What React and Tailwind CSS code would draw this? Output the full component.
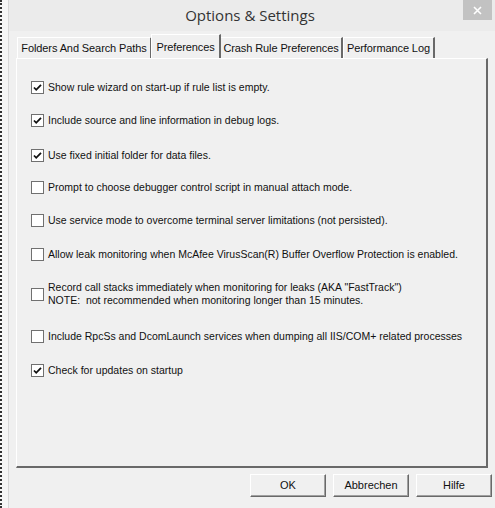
import React from "react";

const prefs = [
  { checked: true, lines: ["Show rule wizard on start-up if rule list is empty."], gap: "mb-[19px]" },
  { checked: true, lines: ["Include source and line information in debug logs."], gap: "mb-[21px]" },
  { checked: true, lines: ["Use fixed initial folder for data files."], gap: "mb-[18px]" },
  { checked: false, lines: ["Prompt to choose debugger control script in manual attach mode."], gap: "mb-[19px]" },
  { checked: false, lines: ["Use service mode to overcome terminal server limitations (not persisted)."], gap: "mb-[20px]" },
  { checked: false, lines: ["Allow leak monitoring when McAfee VirusScan(R) Buffer Overflow Protection is enabled."], gap: "mb-[19px]" },
  {
    checked: false,
    lines: [
      'Record call stacks immediately when monitoring for leaks (AKA "FastTrack")',
      "NOTE:  not recommended when monitoring longer than 15 minutes.",
    ],
    gap: "mb-[21px]",
  },
  { checked: false, lines: ["Include RpcSs and DcomLaunch services when dumping all IIS/COM+ related processes"], gap: "mb-[20px]" },
  { checked: true, lines: ["Check for updates on startup"], gap: "" },
];

const tabs = [
  { label: "Folders And Search Paths", w: "w-[135px]" },
  { label: "Preferences", w: "w-[70px]", active: true },
  { label: "Crash Rule Preferences", w: "w-[123px]" },
  { label: "Performance Log", w: "w-[92px]" },
];

function Checkbox({ checked }) {
  return (
    <div className="w-[13px] h-[13px] shrink-0 border border-[#707070] bg-white flex items-center justify-center">
      {checked && (
        <svg width="9" height="9" viewBox="0 0 9 9">
          <path d="M1 4.5 L3.2 6.8 L8 1.8" stroke="#111" strokeWidth="1.8" fill="none" />
        </svg>
      )}
    </div>
  );
}

function Button({ children }) {
  return (
    <button className="w-[76px] h-[23px] bg-[#f0f0f0] border border-t-white border-l-white border-r-[#696969] border-b-[#696969] shadow-[inset_-1px_-1px_0_#a0a0a0] text-[11px] text-[#111]">
      {children}
    </button>
  );
}

export default function App() {
  return (
    <div className="w-[495px] h-[508px] flex bg-[#f0f0f0] overflow-hidden font-['Liberation_Sans',sans-serif] text-[#111] relative">
      {/* window edge strip */}
      <div className="w-[8px] shrink-0 bg-[#f6f6f6] border-l-2 border-dotted border-[#333]" />

      <div className="flex-1 flex flex-col border-l border-[#d8d8d8]">
        {/* title bar */}
        <div className="h-[31px] shrink-0 bg-[#ebebeb] flex items-start">
          <div className="flex-1 text-center pt-[4px] pr-[4px] text-[15px] text-[#333] font-['Open_Sans',sans-serif]">
            Options &amp; Settings
          </div>
        </div>
        <div className="absolute right-[3px] top-0 w-[29px] h-[20px] bg-[#c2c2c2] flex items-center justify-center">
          <svg width="9" height="9" viewBox="0 0 9 9">
            <path d="M1 1 L8 8 M8 1 L1 8" stroke="#fff" strokeWidth="1.6" />
          </svg>
        </div>

        {/* tabs */}
        <div className="flex items-end h-[27px] pl-[8px] text-[11px] tracking-[-0.1px] whitespace-nowrap">
          {tabs.map((t) =>
            t.active ? (
              <div
                key={t.label}
                className={`${t.w} h-[24px] -mx-[1px] relative z-10 bg-[#f0f0f0] border-t border-l border-white border-r-2 border-r-[#696969] flex items-start justify-center pt-[4px]`}
              >
                {t.label}
              </div>
            ) : (
              <div
                key={t.label}
                className={`${t.w} h-[21px] border-t border-l border-white border-r-2 border-r-[#696969] flex items-center justify-center`}
              >
                {t.label}
              </div>
            )
          )}
        </div>

        {/* tab panel */}
        <div className="ml-[7px] mr-[7px] h-[410px] border-t border-l border-white border-r-2 border-r-[#696969] border-b-2 border-b-[#696969] flex flex-col pl-[14px] pt-[21px] text-[10.5px] leading-[13px] whitespace-nowrap">
          {prefs.map((p, i) => (
            <div
              key={i}
              className={`flex items-center gap-[4px] ${p.lines.length > 1 ? "h-[28px]" : "h-[14px]"} ${p.gap}`}
            >
              <Checkbox checked={p.checked} />
              <div>
                {p.lines.map((l) => (
                  <div key={l} className="whitespace-pre">{l}</div>
                ))}
              </div>
            </div>
          ))}
        </div>

        {/* buttons */}
        <div className="flex justify-end gap-[7px] pr-[3px] pt-[6px]">
          <Button>OK</Button>
          <Button>Abbrechen</Button>
          <Button>Hilfe</Button>
        </div>
      </div>
    </div>
  );
}
